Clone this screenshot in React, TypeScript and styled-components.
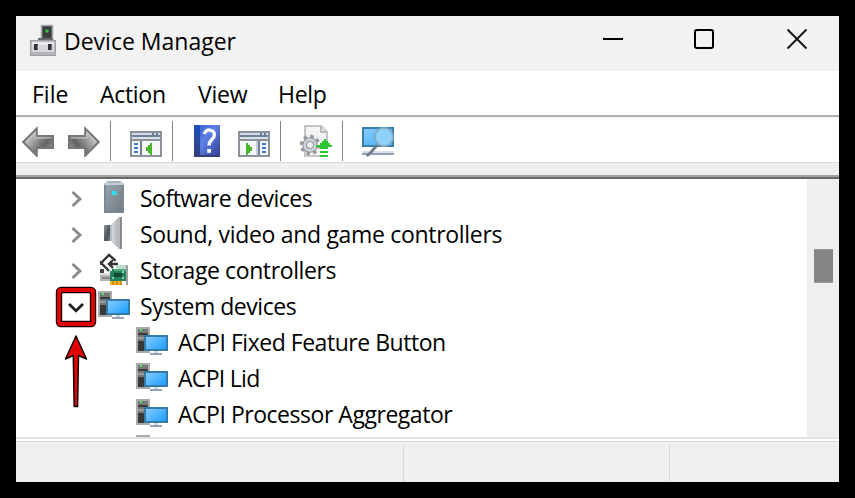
import React from 'react';
import styled, { createGlobalStyle } from 'styled-components';

const GlobalStyle = createGlobalStyle`
  * {
    box-sizing: border-box;
  }

  body {
    margin: 0;
    background: #000;
    color: #000;
    font-family: 'Open Sans', 'Noto Sans', sans-serif;
    font-size: 23px;
  }
`;

const Desktop = styled.div`
  width: 855px;
  height: 498px;
  padding: 16px;
  background: #000;
`;

const Window = styled.div`
  display: flex;
  flex-direction: column;
  height: 466px;
  background: #fff;
  overflow: hidden;
`;

const TitleBar = styled.header`
  display: flex;
  flex: none;
  justify-content: space-between;
  height: 55px;
  padding: 7px 31px 0 11px;
  background: #f2f2f2;
`;

const TitleGroup = styled.div`
  display: flex;
  gap: 5px;
`;

const Label = styled.span<{ $tracking?: number }>`
  letter-spacing: ${(props) => props.$tracking || 0}px;
  line-height: 36px;
  white-space: nowrap;
`;

const WindowButtons = styled.div`
  display: flex;
  gap: 70px;
  padding-top: 5px;
`;

const MenuBar = styled.nav`
  display: flex;
  flex: none;
  height: 46px;
  padding: 5px 0 0 16px;
  border-bottom: 2px solid #b0b0b0;
`;

const MenuItem = styled.div<{ $width: number }>`
  width: ${(props) => props.$width}px;
`;

const ToolBar = styled.div`
  display: flex;
  flex: none;
  height: 46px;
  padding: 2px 6px 0;
  border-top: 2px solid #f0f6fc;
  border-bottom: 1px solid #dadada;
`;

const ToolGroup = styled.div`
  display: flex;
  gap: 14px;
  height: 40px;
  padding-top: 4px;

  &:not(:last-child) {
    margin-right: 19px;
    padding-right: 10px;
    border-right: 1px solid #868686;
  }
`;

const Band = styled.div`
  flex: none;
  height: 16px;
  background: #efefef;
  border-bottom: 2px solid #696969;
  box-shadow: inset 0 -2px #a0a0a0;
`;

const Content = styled.main`
  display: flex;
  flex: none;
  height: 258px;
`;

const Tree = styled.ul`
  flex: 1;
  height: 258px;
  margin: 0;
  padding: 2px 0 0 40px;
  list-style: none;
  overflow: hidden;
`;

const TreeRow = styled.li<{ $level: number }>`
  display: flex;
  align-items: flex-start;
  height: 36px;
  padding-left: ${(props) => (props.$level ? 80 : 0)}px;

  > svg {
    flex: none;
  }

  > span {
    margin-left: 10px;
    line-height: 34px;
  }
`;

const Toggle = styled.div`
  position: relative;
  flex: none;
  width: 42px;
  height: 36px;
`;

const Callout = styled.svg`
  position: absolute;
  top: -3px;
  left: 0;
  overflow: visible;
`;

const ScrollBar = styled.div`
  width: 32px;
  padding: 70px 6px 0 7px;
  background: #efefef;
`;

const Thumb = styled.div`
  height: 34px;
  background: #858585;
  border: solid #999;
  border-width: 1px 0;
`;

const StatusBar = styled.footer`
  display: flex;
  flex: 1;
  border-top: 2px solid #e3e3e3;
  background: #fff;
  padding-top: 2px;
`;

const StatusCells = styled.div`
  display: flex;
  flex: 1;
  padding-top: 3px;
  border-top: 1px solid #d7d7d7;
  background: #efefef;
`;

const StatusCell = styled.div<{ $width: number }>`
  width: ${(props) => props.$width}px;
  border-right: 1px solid #d7d7d7;
`;

// All the small icons share a 16 unit grid, two pixels to a unit.
const Icon: React.FC<{ children: React.ReactNode }> = ({ children }) => (
  <svg width="32" height="32" viewBox="0 0 16 16" shapeRendering="crispEdges">
    {children}
  </svg>
);

const ManagerIcon = () => (
  <svg width="32" height="34" viewBox="0 0 32 34">
    <path d="M14.500 2.500h11v14h-11z" fill="#3c3e40" stroke="#a8abad" strokeWidth="1.6" />
    <path d="M11 15h15v3H11z" fill="#66696c" />
    <circle cx="20" cy="8" r="1.8" fill="#35b93c" />
    <path d="M3.7 17.7h24.6v14.6H3.7z" fill="#d5d6d9" stroke="#9c9ea1" strokeWidth="1.5" />
    <path d="M5 19h22v3H5z" fill="#e9eaec" />
    <path d="M5 29h22v2.5H5z" fill="#b3b4b8" />
    <path d="M7 21h4v6H7zM21 21h4v6h-4z" fill="#2f3234" />
    <path d="M10 22h1v5h-1zM24 22h1v5h-1z" fill="#77797c" />
  </svg>
);

const ArrowIcon: React.FC<{ id: string; flip?: boolean }> = ({ id, flip }) => (
  <svg width="32" height="32" viewBox="0 0 16 16">
    <defs>
      <linearGradient id={id} x1="0" y1="0" x2="1" y2="0.6">
        <stop offset="0" stopColor="#a8a8a8" />
        <stop offset="0.35" stopColor="#b4b4b4" />
        <stop offset="0.8" stopColor="#616161" />
        <stop offset="1" stopColor="#8d8d8d" />
      </linearGradient>
    </defs>
    <g transform={flip ? 'translate(16 0) scale(-1 1)' : undefined}>
      <path
        d="M.6 8.5 7.4 1.7V5.5h8.1v6H7.4v3.9z"
        fill={`url(#${id})`}
        stroke="#777"
        strokeWidth="1"
      />
      <path d="M2 8.5 6.6 4v2.4h8" fill="none" stroke="#c5c5c5" strokeWidth=".6" />
    </g>
  </svg>
);

const PaneIcon: React.FC<{ right?: boolean }> = ({ right }) => (
  <Icon>
    <path d="M0 3h16v13H0z" fill="#8b929b" />
    <path d="M1 4h14v1H1z" fill="#d5dee6" />
    <path d="M11 4h1v1h-1zM13 4h1v1h-1z" fill="#6d7c92" />
    <path d="M1 5h14v1H1z" fill="#71809a" />
    <path d="M1 6h14v1H1z" fill="#d9e1e8" />
    <path d="M1 8h14v7H1z" fill="#f6f7f8" />
    {right ? (
      <>
        <path d="M10 8h1v7h-1z" fill="#71809a" />
        <path d="M9 8h1v7H9z" fill="#c9d0d8" />
        <path d="M12 9h2v1h-2zM12 11h2v1h-2zM12 13h2v1h-2z" fill="#3b7fc9" />
        <path d="M4 9h1v1h1v1h1v2H6v1H5v1H4z" fill="#49b52b" />
      </>
    ) : (
      <>
        <path d="M5 8h1v7H5z" fill="#71809a" />
        <path d="M2 9h2v1H2zM2 11h2v1H2zM2 13h2v1H2z" fill="#3b7fc9" />
        <path d="M11 9h-1v1H9v1H8v2h1v1h1v1h1z" fill="#49b52b" />
      </>
    )}
  </Icon>
);

const HelpIcon = () => (
  <svg width="32" height="32" viewBox="0 0 16 16">
    <defs>
      <linearGradient id="help" x1="0" y1="0" x2="1" y2="1">
        <stop offset="0" stopColor="#315fce" />
        <stop offset=".45" stopColor="#5d7fe4" />
        <stop offset="1" stopColor="#303d91" />
      </linearGradient>
      <linearGradient id="spine" x1="0" y1="0" x2="0" y2="1">
        <stop offset="0" stopColor="#1d4fb9" />
        <stop offset="1" stopColor="#343f7c" />
      </linearGradient>
    </defs>
    <path d="M1 0h13v16H1z" fill="url(#help)" />
    <path d="M1 0h3v16H1z" fill="url(#spine)" />
    <path d="M1 15h13v1H1z" fill="#34406f" />
    <path
      d="M6.200 4.600C6.400 1.800 11.200 1.800 11.200 4.900c0 2.400-2.700 2.400-2.700 5.300"
      fill="none"
      stroke="#fff"
      strokeWidth="1.700"
    />
    <path d="M7.600 12h1.900v1.900H7.600z" fill="#fff" />
  </svg>
);

const UpdateIcon = () => (
  <svg width="32" height="32" viewBox="0 0 16 16">
    <path d="M2.5.5h8l3 3v12h-11z" fill="#f4f4f4" stroke="#c4c4c4" />
    <path d="M10.5.5v3h3" fill="#dedede" stroke="#bcbcbc" />
    <circle cx="5" cy="10" r="4.1" fill="none" stroke="#8f979d" strokeWidth="2" strokeDasharray="1.61 1.61" />
    <circle cx="5" cy="10" r="2.7" fill="none" stroke="#8f979d" strokeWidth="2.4" />
    <circle cx="5" cy="10" r="2.7" fill="none" stroke="#cfd6db" strokeWidth="1.3" />
    <g shapeRendering="crispEdges" fill="#2dc52f">
      <path d="M12 7h1v1h1v1h1v1h1v1h-2v1h-4v-1H8v-1h2V9h1V8h1z" />
      <path d="M10 12h4v4h-4z" fill="#effff0" />
      <path d="M10 11h4v1h-4zM10 13h4v1h-4zM10 15h4v1h-4z" />
    </g>
  </svg>
);

const ScanIcon = () => (
  <svg width="32" height="32" viewBox="0 0 16 16">
    <defs>
      <linearGradient id="scan" x1="0" y1="0" x2="1" y2="1">
        <stop offset="0" stopColor="#8bcdfc" />
        <stop offset="1" stopColor="#3facf5" />
      </linearGradient>
    </defs>
    <path d="M.5 1.500h15v9H.5z" fill="url(#scan)" stroke="#3880aa" />
    <path d="M0 13h16v1H0z" fill="#d7dfe8" />
    <path d="M0 14h16v1H0z" fill="#8fa2b8" />
    <path d="m7.600 10-3 3.500L2.400 15.500" fill="none" stroke="#6d7d88" strokeWidth="1.400" />
    <circle cx="11" cy="6" r="4.5" fill="#8ed2fb" stroke="#83adc7" />
  </svg>
);

const SoftwareIcon = () => (
  <Icon>
    <defs>
      <linearGradient id="soft" x1="0" y1="0" x2="1" y2="1">
        <stop offset="0" stopColor="#98a5ae" />
        <stop offset="1" stopColor="#727c85" />
      </linearGradient>
    </defs>
    <path d="M4 0h8v1h1v1H3V1h1z" fill="#c2ccd1" />
    <path d="M5 0h6v1H5z" fill="#a6b2b9" />
    <path d="M3 2h10v14H3z" fill="#7d8992" />
    <path d="M4 2h8v13H4z" fill="url(#soft)" />
    <path d="M7 5h3v2H7z" fill="#6babb9" />
    <path d="M7 5h2v2H7z" fill="#2ce4f2" />
  </Icon>
);

const SoundIcon = () => (
  <Icon>
    <defs>
      <linearGradient id="horn" x1="0" y1="0" x2="1" y2="0">
        <stop offset="0" stopColor="#e2e4e5" />
        <stop offset=".7" stopColor="#aeb3b7" />
        <stop offset="1" stopColor="#787e83" />
      </linearGradient>
      <linearGradient id="magnet" x1="0" y1="0" x2="1" y2="1">
        <stop offset="0" stopColor="#8a959e" />
        <stop offset=".6" stopColor="#4c545a" />
        <stop offset="1" stopColor="#747b80" />
      </linearGradient>
    </defs>
    <path d="M3 4h3v8H3z" fill="url(#magnet)" />
    <path d="M6 4h1V3h1V2h1V1h1V0h2v16h-2v-1H9v-1H8v-1H7v-1H6z" fill="url(#horn)" />
    <path d="M10 0h1v16h-1z" fill="#b5b9bc" />
    <path d="M11 0h1v16h-1z" fill="#858b90" />
    <path d="M6 4h1v8H6z" fill="#b9bec1" />
  </Icon>
);

const StorageIcon = () => (
  <Icon>
    <path d="M1 10h7v4H1z" fill="#b5b5b5" />
    <path d="M1 10h7v1H1z" fill="#dedede" />
    <path d="M2 12h4v1H2z" fill="#858585" />
    <g fill="none" stroke="#343434" strokeWidth="1.200" shapeRendering="auto">
      <path d="M8.800 3.800 5.500 1 1.600 5 5.500 9" />
      <path d="M10 5.500H5.500M7.500 3.500l-2 2 2 2" />
    </g>
    <path d="M1 4h1v2H1zM1 8h2v2H1z" fill="#444" />
    <path d="M9 6h5v2H9z" fill="#bfdccb" />
    <path d="M7 8h7v6H6V9h1z" fill="#23825b" />
    <path d="M8 8h6v1H8z" fill="#52ac82" />
    <path d="M8 10h4v2H8z" fill="#124834" />
    <path d="M12 9h1v1h-1zM7 12h1v1H7zM12 12h1v1h-1z" fill="#7ad8ac" />
    <path d="M6 14h6v2H6z" fill="#efb51d" />
    <path d="M7 14h1v2H7zM9 14h1v2H9zM11 14h1v2h-1z" fill="#dd8d16" />
    <path d="M14 6h1v10h-1z" fill="#9d9fa1" />
  </Icon>
);

const ComputerIcon = () => (
  <Icon>
    <defs>
      <linearGradient id="screen" x1="0" y1="0" x2="1" y2="0.7">
        <stop offset="0" stopColor="#86caff" />
        <stop offset="1" stopColor="#28a5ff" />
      </linearGradient>
    </defs>
    <path d="M0 1h7v13H0z" fill="#aaa" />
    <path d="M1 2h5v11H1z" fill="#777" />
    <path d="M2 2h1v1H2z" fill="#4df24d" />
    <path d="M1 4h5v1H1z" fill="#3c3c3c" />
    <path d="M1 6h5v1H1z" fill="#999" />
    <path d="M1 8h3v5H1z" fill="#383838" />
    <path d="M4 5h12v8H4z" fill="#347ba8" />
    <path d="M5 6h10v6H5z" fill="url(#screen)" />
    <path d="M9 13h2v1H9z" fill="#c5d4e1" />
    <path d="M7 14h6v1H7z" fill="#93a3bb" />
  </Icon>
);

const Chevron: React.FC<{ open?: boolean }> = ({ open }) => (
  <svg width="42" height="36" viewBox="0 0 42 36" fill="none">
    {open ? (
      <path d="m13 15 7 6.700 7-6.700" stroke="#222" strokeWidth="2.800" />
    ) : (
      <path d="m16.500 11 7.500 7-7.500 7" stroke="#8b8b8b" strokeWidth="2.900" />
    )}
  </svg>
);

// Red frame around the expand button, with the arrow that points up at it.
const Highlight = () => (
  <Callout width="40" height="124" viewBox="0 0 40 124">
    <rect x="3" y="4" width="34" height="34" rx="2" fill="none" stroke="#1a0000" strokeWidth="6.400" />
    <rect x="3" y="4" width="34" height="34" rx="1.500" fill="none" stroke="#df0505" strokeWidth="3.800" />
    <path
      d="M20 50 30.500 73 22.500 69.500 21.600 120.500H18.200L17.300 69.500 9.500 73z"
      fill="#df0505"
      stroke="#160000"
      strokeWidth="1.500"
      strokeLinejoin="round"
    />
  </Callout>
);

const menu = [
  { name: 'File', width: 68, tracking: 0 },
  { name: 'Action', width: 98, tracking: -0.3 },
  { name: 'View', width: 80, tracking: -0.2 },
  { name: 'Help', width: 60, tracking: -0.3 },
];

interface TreeItem {
  name: string;
  icon: React.FC;
  level: number;
  open?: boolean;
  tracking: number;
}

const devices: TreeItem[] = [
  { name: 'Software devices', icon: SoftwareIcon, level: 0, tracking: -0.52 },
  { name: 'Sound, video and game controllers', icon: SoundIcon, level: 0, tracking: -0.31 },
  { name: 'Storage controllers', icon: StorageIcon, level: 0, tracking: -0.39 },
  { name: 'System devices', icon: ComputerIcon, level: 0, open: true, tracking: -0.46 },
  { name: 'ACPI Fixed Feature Button', icon: ComputerIcon, level: 1, tracking: -0.47 },
  { name: 'ACPI Lid', icon: ComputerIcon, level: 1, tracking: -0.7 },
  { name: 'ACPI Processor Aggregator', icon: ComputerIcon, level: 1, tracking: -0.47 },
  { name: '', icon: ComputerIcon, level: 1, tracking: 0 },
];

const App: React.FC = () => {
  return (
    <>
      <GlobalStyle />
      <Desktop>
        <Window>
          <TitleBar>
            <TitleGroup>
              <ManagerIcon />
              <Label>Device Manager</Label>
            </TitleGroup>
            <WindowButtons>
              <svg width="22" height="22" viewBox="0 0 22 22">
                <path d="M1 11h20" stroke="#000" strokeWidth="2" />
              </svg>
              <svg width="22" height="22" viewBox="0 0 22 22">
                <rect x="1" y="2" width="18" height="18" rx="2" fill="none" stroke="#000" strokeWidth="2" />
              </svg>
              <svg width="22" height="22" viewBox="0 0 22 22">
                <path d="m1.500 1.500 19 19m0-19-19 19" stroke="#111" strokeWidth="1.800" />
              </svg>
            </WindowButtons>
          </TitleBar>
          <MenuBar>
            {menu.map((item) => (
              <MenuItem key={item.name} $width={item.width}>
                <Label $tracking={item.tracking}>{item.name}</Label>
              </MenuItem>
            ))}
          </MenuBar>
          <ToolBar>
            <ToolGroup>
              <ArrowIcon id="back" />
              <ArrowIcon id="forward" flip />
            </ToolGroup>
            <ToolGroup>
              <PaneIcon />
            </ToolGroup>
            <ToolGroup>
              <HelpIcon />
              <PaneIcon right />
            </ToolGroup>
            <ToolGroup>
              <UpdateIcon />
            </ToolGroup>
            <ToolGroup>
              <ScanIcon />
            </ToolGroup>
          </ToolBar>
          <Band />
          <Content>
            <Tree>
              {devices.map(({ name, icon: DeviceIcon, level, open, tracking }, index) => (
                <TreeRow key={index} $level={level}>
                  {level === 0 && (
                    <Toggle>
                      <Chevron open={open} />
                      {open && <Highlight />}
                    </Toggle>
                  )}
                  <DeviceIcon />
                  {name && <Label $tracking={tracking}>{name}</Label>}
                </TreeRow>
              ))}
            </Tree>
            <ScrollBar>
              <Thumb />
            </ScrollBar>
          </Content>
          <StatusBar>
            <StatusCells>
              <StatusCell $width={388} />
              <StatusCell $width={266} />
            </StatusCells>
          </StatusBar>
        </Window>
      </Desktop>
    </>
  );
};

export default App;
